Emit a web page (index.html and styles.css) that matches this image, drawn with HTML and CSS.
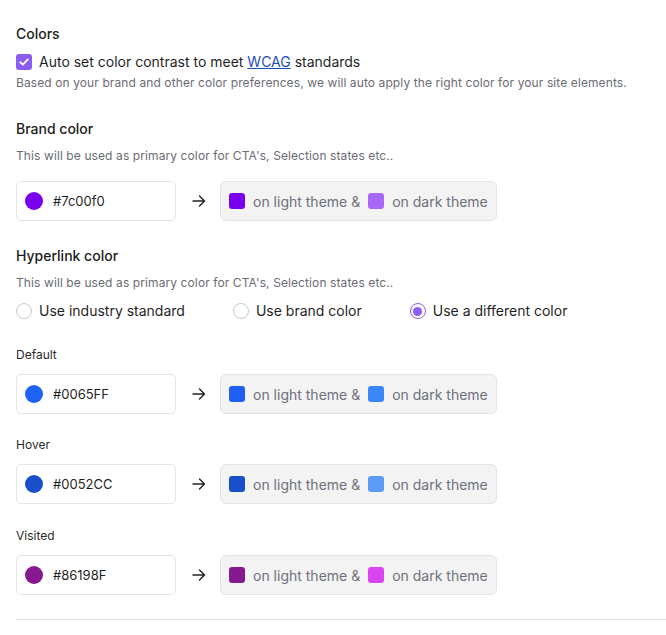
FILE: index.html
```html
<!DOCTYPE html>
<html lang="en">
<head>
<meta charset="utf-8">
<title>Colors</title>
<link rel="stylesheet" href="styles.css">
</head>
<body>
<div class="page">
  <h2 class="heading">Colors</h2>
  <label class="check-row">
    <span class="checkbox">
      <svg width="10" height="8" viewBox="0 0 10 8"><path d="M1.2 4.2 L3.8 6.6 L8.8 1.4" fill="none" stroke="#fff" stroke-width="1.8" stroke-linecap="round" stroke-linejoin="round"/></svg>
    </span>
    <span>Auto set color contrast to meet <a class="link" href="#">WCAG</a> standards</span>
  </label>
  <p class="sub">Based on your brand and other color preferences, we will auto apply the right color for your site elements.</p>

  <h2 class="heading section">Brand color</h2>
  <p class="desc">This will be used as primary color for CTA's, Selection states etc..</p>
  <div class="color-row first">
    <div class="input"><span class="dot c-brand"></span><span class="hex">#7c00f0</span></div>
    <svg class="arrow" width="14" height="12" viewBox="0 0 14 12"><path d="M1 6 H12.5 M7.5 1 L12.5 6 L7.5 11" fill="none" stroke="#222" stroke-width="1.4" stroke-linecap="round" stroke-linejoin="round"/></svg>
    <div class="preview"><span class="sw s-brand-l"></span><span class="ptext">on light theme &amp;</span><span class="sw s-brand-d"></span><span class="ptext">on dark theme</span></div>
  </div>

  <h2 class="heading section2">Hyperlink color</h2>
  <p class="desc">This will be used as primary color for CTA's, Selection states etc..</p>
  <div class="radio-row">
    <label class="radio-item"><span class="radio"></span>Use industry standard</label>
    <label class="radio-item"><span class="radio"></span>Use brand color</label>
    <label class="radio-item"><span class="radio on"></span>Use a different color</label>
  </div>

  <p class="label l-first">Default</p>
  <div class="color-row">
    <div class="input"><span class="dot c-def"></span><span class="hex">#0065FF</span></div>
    <svg class="arrow" width="14" height="12" viewBox="0 0 14 12"><path d="M1 6 H12.5 M7.5 1 L12.5 6 L7.5 11" fill="none" stroke="#222" stroke-width="1.4" stroke-linecap="round" stroke-linejoin="round"/></svg>
    <div class="preview"><span class="sw s-def-l"></span><span class="ptext">on light theme &amp;</span><span class="sw s-def-d"></span><span class="ptext">on dark theme</span></div>
  </div>

  <p class="label l-hover">Hover</p>
  <div class="color-row">
    <div class="input"><span class="dot c-hov"></span><span class="hex">#0052CC</span></div>
    <svg class="arrow" width="14" height="12" viewBox="0 0 14 12"><path d="M1 6 H12.5 M7.5 1 L12.5 6 L7.5 11" fill="none" stroke="#222" stroke-width="1.4" stroke-linecap="round" stroke-linejoin="round"/></svg>
    <div class="preview"><span class="sw s-hov-l"></span><span class="ptext">on light theme &amp;</span><span class="sw s-hov-d"></span><span class="ptext">on dark theme</span></div>
  </div>

  <p class="label">Visited</p>
  <div class="color-row">
    <div class="input"><span class="dot c-vis"></span><span class="hex">#86198F</span></div>
    <svg class="arrow" width="14" height="12" viewBox="0 0 14 12"><path d="M1 6 H12.5 M7.5 1 L12.5 6 L7.5 11" fill="none" stroke="#222" stroke-width="1.4" stroke-linecap="round" stroke-linejoin="round"/></svg>
    <div class="preview"><span class="sw s-vis-l"></span><span class="ptext">on light theme &amp;</span><span class="sw s-vis-d"></span><span class="ptext">on dark theme</span></div>
  </div>

  <hr class="divider">
</div>
</body>
</html>
```

FILE: styles.css
```css
* { box-sizing: border-box; }
html, body { margin: 0; padding: 0; background: #fff; }
body {
  font-family: Inter, "Noto Sans", "Liberation Sans", sans-serif;
  color: #1f1f1f;
}
.page { padding: 24px 0 0 16px; }
.heading {
  margin: 0;
  font-size: 14px;
  line-height: 20px;
  font-weight: 500;
  color: #1c1c1c;
}
.section { margin-top: 27px; }
.section2 { margin-top: 25px; }
.check-row {
  margin-top: 8px;
  display: flex;
  align-items: center;
  gap: 7px;
  font-size: 14px;
  line-height: 20px;
  color: #1f1f1f;
}
.checkbox {
  width: 16px;
  height: 16px;
  border-radius: 3px;
  background: #8c5cf0;
  display: flex;
  align-items: center;
  justify-content: center;
}
.link { color: #1d4bb8; text-decoration: underline; }
.sub {
  margin: 2px 0 0;
  font-size: 12px;
  line-height: 18px;
  letter-spacing: 0.1px;
  color: #6b6b73;
}
.desc {
  margin: 8px 0 0;
  font-size: 12px;
  line-height: 18px;
  letter-spacing: 0.1px;
  color: #6b6b73;
}
.color-row {
  display: flex;
  align-items: center;
  margin-top: 10px;
}
.color-row.first { margin-top: 16px; }
.input {
  width: 160px;
  height: 40px;
  border: 1px solid #e4e4e7;
  border-radius: 5px;
  display: flex;
  align-items: center;
  padding-left: 8px;
  gap: 10px;
  background: #fff;
}
.dot { width: 18px; height: 18px; border-radius: 50%; }
.hex { font-size: 13px; color: #1f1f1f; }
.arrow { margin: 0 14px 0 16px; }
.preview {
  width: 277px;
  height: 40px;
  background: #f3f3f4;
  border: 1px solid #e4e4e7;
  border-radius: 6px;
  display: flex;
  align-items: center;
  padding-left: 8px;
}
.sw { width: 16px; height: 16px; border-radius: 3px; flex: none; }
.ptext {
  font-size: 14px;
  color: #6e717b;
  margin-left: 8px;
  margin-right: 8px;
}
.c-brand, .s-brand-l { background: #7c00f0; }
.s-brand-d { background: #a86af6; }
.c-def { background: #1f63f6; }
.s-def-l { background: #1f5ff4; }
.s-def-d { background: #3b86f6; }
.c-hov, .s-hov-l { background: #1a4fcb; }
.s-hov-d { background: #5a9cf8; }
.c-vis, .s-vis-l { background: #86198f; }
.s-vis-d { background: #d946ef; }
.radio-row {
  margin-top: 9px;
  display: flex;
  gap: 48px;
}
.radio-item {
  display: flex;
  align-items: center;
  gap: 7px;
  font-size: 14px;
  line-height: 20px;
  color: #1f1f1f;
}
.radio {
  width: 16px;
  height: 16px;
  border-radius: 50%;
  border: 1px solid #c8c8cc;
  background: #fff;
  display: flex;
  align-items: center;
  justify-content: center;
}
.radio.on { border: 1.5px solid #8b5cf6; }
.radio.on::after {
  content: "";
  width: 9px;
  height: 9px;
  border-radius: 50%;
  background: #8b5cf6;
}
.label {
  margin: 23px 0 0;
  font-size: 12px;
  line-height: 18px;
  color: #2a2a2a;
}
.label.l-first { margin-top: 25px; }
.label.l-hover { margin-top: 22px; }
.divider {
  margin: 24px 0 0;
  border: 0;
  border-top: 1px solid #e5e5e5;
}
```
